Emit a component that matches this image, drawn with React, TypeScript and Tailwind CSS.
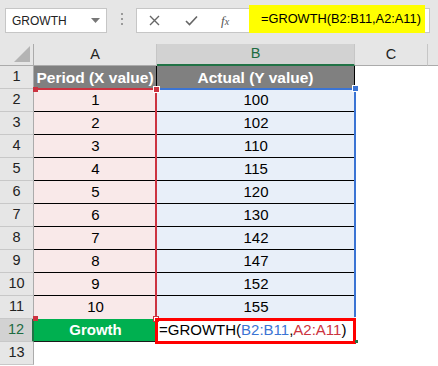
import React from "react";

const F = "font-['Liberation_Sans','Arial',sans-serif]";

const aVals = ["1","2","3","4","5","6","7","8","9","10"];
const bVals = ["100","102","110","115","120","130","142","147","152","155"];

function RowHead({ n, active }: { n: number; active?: boolean }) {
  return (
    <div
      className={
        "flex items-center justify-center text-[14.5px] border-b border-[#c8c8c8] " +
        (active
          ? "bg-[#d2d2d2] text-[#1e6b41] border-r-2 border-r-[#217346]"
          : "bg-[#e6e6e6] text-[#222] border-r border-r-[#ababab]")
      }
    >
      {n}
    </div>
  );
}

export default function App() {
  const rows: React.ReactNode[] = [];
  rows.push(<RowHead key="h1" n={1} />);
  rows.push(
    <div key="a1" className="bg-[#808080] text-white font-bold text-[15.5px] flex items-center justify-center border-r border-black">
      Period (X value)
    </div>
  );
  rows.push(
    <div key="b1" className="bg-[#808080] text-white font-bold text-[15.5px] flex items-center justify-center border-r border-black">
      Actual (Y value)
    </div>
  );
  rows.push(<div key="c1" className="bg-white" />);
  rows.push(<div key="d1" className="bg-white" />);

  for (let i = 0; i < 10; i++) {
    const r = i + 2;
    const line = i < 9 ? "border-b border-black" : "";
    rows.push(<RowHead key={"h" + r} n={r} />);
    rows.push(
      <div key={"a" + r} className={"bg-[#f9e9e9] text-black text-[15px] flex items-center justify-center " + line}>
        {aVals[i]}
      </div>
    );
    rows.push(
      <div key={"b" + r} className={"bg-[#e8eff9] text-black text-[15px] flex items-center justify-center " + line}>
        {bVals[i]}
      </div>
    );
    rows.push(<div key={"c" + r} className="bg-white" />);
    rows.push(<div key={"d" + r} className="bg-white" />);
  }

  rows.push(<RowHead key="h12" n={12} active />);
  rows.push(
    <div key="a12" className="bg-[#00b050] text-white font-bold text-[15px] flex items-center justify-center border-b border-[#1a1a1a]">
      Growth
    </div>
  );
  rows.push(
    <div key="b12" className="bg-white text-[15px] flex items-center pl-[2px] text-black">
      <span>=GROWTH(</span>
      <span className="text-[#3b74d4]">B2:B11</span>
      <span>,</span>
      <span className="text-[#cc3340]">A2:A11</span>
      <span>)</span>
    </div>
  );
  rows.push(<div key="c12" className="bg-white" />);
  rows.push(<div key="d12" className="bg-white" />);

  rows.push(<RowHead key="h13" n={13} />);
  rows.push(<div key="a13" className="bg-white" />);
  rows.push(<div key="b13" className="bg-white" />);
  rows.push(<div key="c13" className="bg-white" />);
  rows.push(<div key="d13" className="bg-white" />);

  return (
    <div className={"w-[438px] h-[366px] overflow-hidden bg-white " + F}>
      <div className="h-[44px] bg-[#e6e6e6] flex items-start">
        <div className="ml-[5px] mt-[8px] w-[102px] h-[25px] bg-white border border-[#c6c6c6] flex items-center pl-[6px] pr-[6px] text-[12px] text-[#222]">
          <span className="flex-1">GROWTH</span>
          <svg width="9" height="5" viewBox="0 0 9 5"><path d="M0 0 L9 0 L4.5 5 Z" fill="#777" /></svg>
        </div>
        <div className="ml-[14px] mt-[13px] flex flex-col gap-[3px]">
          <div className="w-[2px] h-[2px] bg-[#9a9a9a]" />
          <div className="w-[2px] h-[2px] bg-[#9a9a9a]" />
          <div className="w-[2px] h-[2px] bg-[#9a9a9a]" />
        </div>
        <div className="ml-[13px] mt-[8px] w-[294px] h-[25px] bg-white border border-[#c6c6c6] flex items-center">
          <div className="w-[112px] flex items-center">
            <svg className="ml-[12px]" width="11" height="11" viewBox="0 0 11 11">
              <path d="M1 1 L10 10 M10 1 L1 10" stroke="#666" strokeWidth="1.4" />
            </svg>
            <svg className="ml-[25px]" width="13" height="11" viewBox="0 0 13 11">
              <path d="M1 6 L4.5 9.5 L12 1.5" stroke="#666" strokeWidth="1.6" fill="none" />
            </svg>
            <span className="ml-[23px] text-[13px] italic text-[#555] font-['Liberation_Serif',serif]">
              f<span className="text-[10px]">x</span>
            </span>
          </div>
          <div className="-mt-[3px] w-[176px] h-[28px] bg-[#ffff00] flex items-center pl-[12px] text-[12.8px] text-black whitespace-nowrap overflow-hidden">
            =GROWTH(B2:B11,A2:A11)
          </div>
        </div>
      </div>

      <div className="relative grid grid-cols-[34px_123px_198px_73px_10px] grid-rows-[22px_repeat(13,23px)]">
        <div className="bg-[#e6e6e6] border-r border-r-[#ababab] border-b border-b-[#ababab] flex items-end justify-end pr-[3px] pb-[3px]">
          <svg width="16" height="16" viewBox="0 0 16 16"><path d="M16 0 L16 16 L0 16 Z" fill="#b4b4b4" /></svg>
        </div>
        <div className="bg-[#e6e6e6] border-r border-r-[#c6c6c6] border-b border-b-[#ababab] flex items-center justify-center text-[14.5px] text-[#222]">A</div>
        <div className="bg-[#d2d2d2] border-r border-r-[#c6c6c6] border-b-2 border-b-[#217346] flex items-center justify-center text-[14.5px] text-[#1e6b41]">B</div>
        <div className="bg-[#e6e6e6] border-r border-r-[#c6c6c6] border-b border-b-[#ababab] flex items-center justify-center text-[14.5px] text-[#222]">C</div>
        <div className="bg-[#e6e6e6] border-b border-b-[#ababab]" />
        {rows}

        <div className="absolute left-[34px] top-[44px] w-[123px] h-[231px] border-t-2 border-r-2 border-[#cc3340] pointer-events-none" />
        <div className="absolute left-[157px] top-[44px] w-[199px] h-[229px] border-t-2 border-r-2 border-[#3b74d4] pointer-events-none" />
        <div className="absolute left-[33px] top-[43px] w-[5px] h-[5px] bg-[#cc3340]" />
        <div className="absolute left-[153px] top-[42px] w-[7px] h-[7px] bg-[#cc3340] border border-white" />
        <div className="absolute left-[33px] top-[272px] w-[5px] h-[5px] bg-[#cc3340]" />
        <div className="absolute left-[153px] top-[272px] w-[6px] h-[6px] bg-white border border-[#cc3340]" />
        <div className="absolute left-[352px] top-[41px] w-[7px] h-[7px] bg-[#3b74d4] border border-white" />
        <div className="absolute left-[155px] top-[274px] w-[201px] h-[26px] border-[3px] border-[#ff0000] pointer-events-none" />
        <div className="absolute left-[355px] top-[296px] w-[3px] h-[3px] bg-[#217346]" />
      </div>
    </div>
  );
}
